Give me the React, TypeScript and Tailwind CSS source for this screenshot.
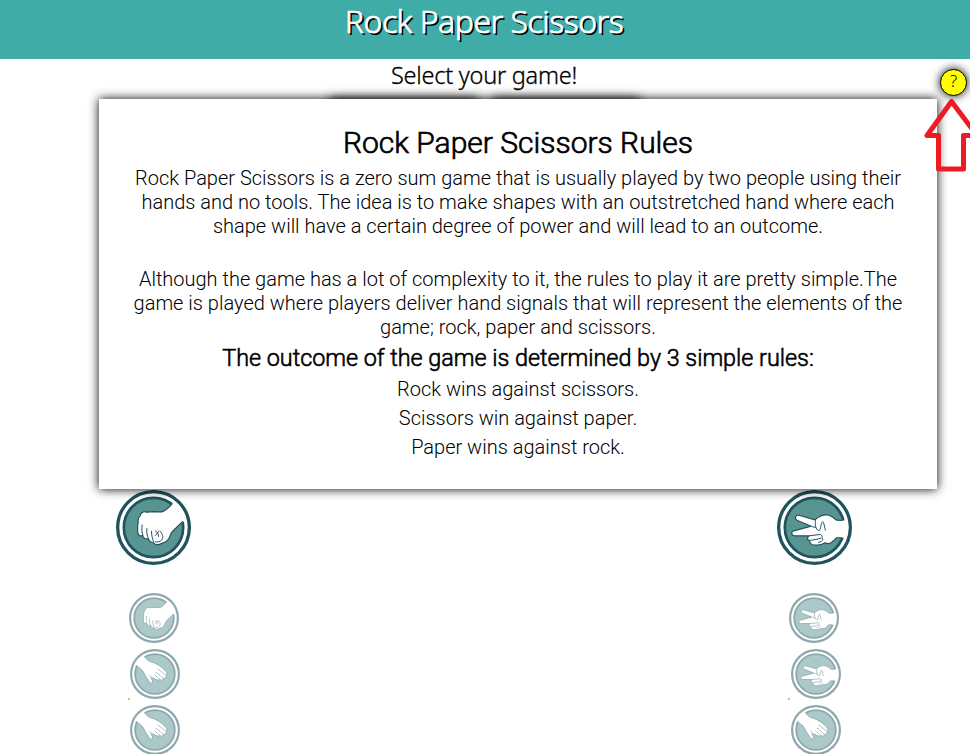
import React from 'react';

type Kind = 'rock' | 'paper' | 'scissors';

const Hand = ({ kind }: { kind: Kind }) => {
  if (kind === 'rock') {
    return (
      <g>
        <path d="M216 50 L176 38 C162 50 152 63 139 67 L111 66 C103 66 97 69 91 67 C81 65 75 72 74 79 C68 83 67 90 68 98 C65 110 66 123 67 132 C69 139 77 141 81 138 C83 147 92 151 98 147 C102 156 109 160 114 160 C119 167 130 167 138 162 C149 159 158 153 162 144 C165 137 166 131 171 126 C181 117 190 107 202 98 L216 86 Z" fill="#fff" stroke="none" />
        <path d="M170 43 C160 53 150 65 139 67 L111 66 C103 66 97 69 91 67 C81 65 75 72 74 79 C68 83 67 90 68 98 C65 110 66 123 67 132 C69 139 77 141 81 138 C83 147 92 151 98 147 C102 156 109 160 114 160 C119 167 130 167 138 162 C149 159 158 153 162 144 C165 137 166 131 171 126 L202 96" fill="none" strokeWidth="3.5" />
        <path d="M80 105 C78 118 79 128 82 138 M94 116 C93 130 95 139 98 146 M108 124 C108 139 111 148 115 159 M119 124 C126 128 130 134 129 142 M119 139 L131 124 M134 125 C141 134 145 143 139 151 C134 158 124 158 119 157" fill="none" strokeWidth="3" />
      </g>
    );
  }
  if (kind === 'scissors') {
    return (
      <g>
        <path d="M220 93 L181 92 C174 86 168 81 158 77 C147 75 136 76 130 81 C123 84 119 86 116 91 L67 77 C58 75 52 86 61 92 L104 110 L52 124 C42 127 44 138 54 139 L98 139 C90 145 92 153 99 153 C99 163 108 168 118 167 C128 168 138 165 146 160 C155 165 164 161 170 155 L181 145 L220 145 Z" fill="#fff" stroke="none" />
        <path d="M199 93 L181 92 C174 86 168 81 158 77 C147 75 136 76 130 81 C123 84 119 86 116 91 L67 77 C58 75 52 86 61 92 L104 110 L52 124 C42 127 44 138 54 139 L98 139 C90 145 92 153 99 153 C99 163 108 168 118 167 C128 168 138 165 146 160 C155 165 164 161 170 155 L181 145 L197 145" fill="none" strokeWidth="3.5" />
        <path d="M117 92 C115 104 117 120 126 123 C134 124 131 109 137 98 C142 92 143 110 147 123 M106 111 L118 114 M98 139 L132 135 C142 140 137 147 127 148 L101 153 M136 145 C144 151 135 158 125 159" fill="none" strokeWidth="3" />
      </g>
    );
  }
  return (
    <g>
      <path d="M8 50 L61 18 L66 36 C75 47 85 57 99 60 C116 65 132 74 144 84 L165 104 C171 112 168 120 164 121 C167 130 158 135 153 134 C152 143 142 144 136 139 C131 146 118 140 112 135 L96 130 C98 137 106 148 102 154 C95 160 85 146 80 136 C69 124 64 105 55 96 L27 72 Z" fill="#fff" stroke="none" />
      <path d="M66 36 C75 47 85 57 99 60 C116 65 132 74 144 84 L165 104 C171 112 168 120 164 121 C167 130 158 135 153 134 C152 143 142 144 136 139 C131 146 118 140 112 135 L96 130 C98 137 106 148 102 154 C95 160 85 146 80 136 C69 124 64 105 55 96 L30 75" fill="none" />
      <path d="M126 91 L164 120 M118 105 L153 134 M112 118 L136 139 M91 118 L97 130" fill="none" strokeDasharray="7 2" />
    </g>
  );
};

const Badge = ({ kind, className }: { kind: Kind; className: string }) => (
  <svg viewBox="1 1 226 226" className={`block shrink-0 ${className}`} stroke="#20535d" strokeWidth="4" strokeLinejoin="round">
    <defs>
      <clipPath id="badge-face">
        <circle cx="114" cy="114" r="102" />
      </clipPath>
    </defs>
    <circle cx="114" cy="114" r="108" fill="#fff" strokeWidth="10" />
    <circle cx="114" cy="114" r="89.5" fill="#579492" strokeWidth="8" />
    <g clipPath="url(#badge-face)">
      <Hand kind={kind} />
    </g>
  </svg>
);

export default function App() {
  return (
    <div className="relative h-[754px] w-[970px] overflow-hidden bg-white text-black">
      <header className="flex h-[59px] justify-center bg-[#40aca8]">
        <h1 className="whitespace-nowrap pr-[2px] font-['Noto_Sans',sans-serif] text-[32px] font-light leading-[42px] tracking-[-0.5px] text-white [-webkit-text-stroke:0.7px_#fff] [text-shadow:2px_2px_0_#000]">Rock Paper Scissors</h1>
      </header>
      <main className="flex flex-col">
        <h2 className="flex h-[38px] justify-center whitespace-nowrap pr-[2px] font-['Noto_Sans',sans-serif] text-[23.5px] font-light leading-[32px] tracking-[-0.25px] [-webkit-text-stroke:0.3px_#000]">Select your game!</h2>
        <div className="flex h-[393px] justify-center gap-[14px] pt-[2px]">
          <div className="h-[60px] w-[148px] bg-neutral-700 shadow-[0_0_10px_#000]" />
          <div className="h-[60px] w-[148px] bg-neutral-700 shadow-[0_0_10px_#000]" />
        </div>
        <div className="flex justify-between pl-[116px] pr-[118px]">
          <Badge kind="rock" className="h-[75px] w-[75px]" />
          <Badge kind="scissors" className="h-[75px] w-[75px]" />
        </div>
        <div className="flex justify-between pl-[129px] pr-[129px] pt-[28px] opacity-50">
          <div className="flex flex-col gap-[6px]">
            <Badge kind="rock" className="h-[50px] w-[50px]" />
            <Badge kind="paper" className="ml-px h-[50px] w-[50px]" />
            <Badge kind="paper" className="ml-px h-[50px] w-[50px]" />
          </div>
          <div className="flex flex-col gap-[6px]">
            <Badge kind="scissors" className="h-[50px] w-[50px]" />
            <Badge kind="scissors" className="ml-[2px] h-[50px] w-[50px]" />
            <Badge kind="paper" className="ml-[2px] h-[50px] w-[50px]" />
          </div>
        </div>
      </main>

      <i className="absolute left-[128px] top-[698px] size-[2px] bg-[#d9b9a8]" />
      <i className="absolute left-[788px] top-[698px] size-[2px] bg-[#a8bed9]" />

      <section className="absolute left-[99px] top-[99px] flex h-[390px] w-[838px] flex-col items-center whitespace-nowrap bg-white pt-[24px] text-center font-['Roboto',sans-serif] text-[20px] font-light leading-6 shadow-[0_0_10px_#000]">
        <h2 className="text-[30px] font-light leading-[40px] [-webkit-text-stroke:0.7px_#000]">Rock Paper Scissors Rules</h2>
        <p className="mt-[3px]">
          Rock Paper Scissors is a zero sum game that is usually played by two people using their<br />
          hands and no tools. The idea is to make shapes with an outstretched hand where each<br />
          shape will have a certain degree of power and will lead to an outcome.
        </p>
        <p className="mt-[29px]">
          Although the game has a lot of complexity to it, the rules to play it are pretty simple.The<br />
          game is played where players deliver hand signals that will represent the elements of the<br />
          game; rock, paper and scissors.
        </p>
        <h3 className="mt-[3px] text-[23.4px] font-light leading-[33px] tracking-[-0.02px] [-webkit-text-stroke:0.6px_#000]">The outcome of the game is determined by 3 simple rules:</h3>
        <p className="leading-[29px]">Rock wins against scissors.</p>
        <p className="leading-[29px]">Scissors win against paper.</p>
        <p className="leading-[29px]">Paper wins against rock.</p>
      </section>

      <button className="absolute left-[940px] top-[69px] flex size-[27px] items-center justify-center rounded-full border border-black bg-[#ff0] pb-[3px] font-['Noto_Sans',sans-serif] text-[17px] font-light text-black shadow-[0_0_10px_#000]">?</button>
      <svg className="absolute left-[920px] top-[95px] h-[80px] w-[50px]" viewBox="0 0 50 80" fill="none" stroke="#ed1c24" strokeWidth="5" strokeLinejoin="round">
        <path d="M31.5 6.5 L7 40.5 H18.5 V74 H43.5 V40.5 H57 Z" />
      </svg>
    </div>
  );
}
